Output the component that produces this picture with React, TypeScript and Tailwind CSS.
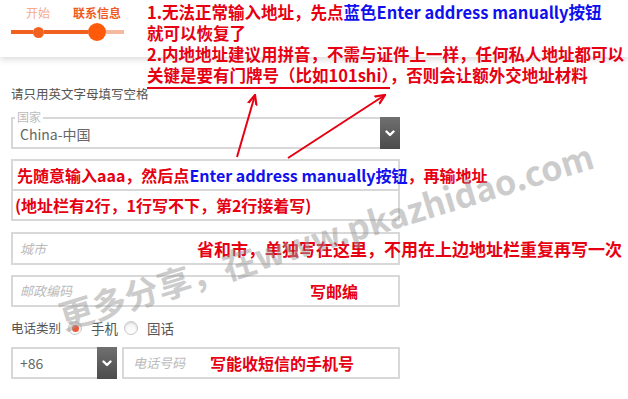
import React from 'react';

function Chevron() {
  return (
    <div className="-my-[2px] -mr-[2px] w-[20px] shrink-0 flex items-center justify-center bg-gradient-to-b from-[#707070] to-[#4c4c4c]">
      <svg width="10" height="7" viewBox="0 0 10 7">
        <path d="M1.5 1.5 L5 5 L8.5 1.5" stroke="#fff" strokeWidth="2.4" fill="none" strokeLinecap="round" strokeLinejoin="round" />
      </svg>
    </div>
  );
}

function Radio({ checked }: { checked?: boolean }) {
  return (
    <span className="w-[14px] h-[14px] rounded-full border border-[#c8c8c8] bg-gradient-to-b from-[#f4f4f4] to-white flex items-center justify-center shadow-[inset_0_1px_2px_rgba(0,0,0,0.15)]">
      {checked && <span className="w-[7px] h-[7px] rounded-full bg-[#ec5a3a]" />}
    </span>
  );
}

export default function App() {
  return (
    <div className="relative w-[628px] h-[399px] overflow-hidden bg-white font-['Noto_Sans_CJK_SC',sans-serif]">
      {/* header: progress + notes */}
      <div className="relative h-[57px] flex shadow-[0_3px_6px_rgba(0,0,0,0.13)]">
        <div className="w-[136px] shrink-0 pl-[11px] pt-[5px]">
          <div className="flex pl-[15px] gap-[23px] text-[12px] leading-[16px]">
            <span className="text-[#f7ab8a]">开始</span>
            <span className="font-bold text-[#ee5a1e]">联系信息</span>
          </div>
          <div className="mt-[2px] h-[18px] flex items-center">
            <span className="w-[22px] h-[4px] bg-[#f2601f]" />
            <span className="w-[11px] h-[11px] rounded-full bg-[#f2601f]" />
            <span className="w-[44px] h-[4px] bg-[#f2601f]" />
            <span className="w-[18px] h-[18px] rounded-full bg-[#ff5a0a]" />
            <span className="w-[18px] h-[4px] bg-[#f5b9a0]" />
          </div>
        </div>
        <div className="relative z-10 pl-[11px] pt-[2px] text-[16.5px] leading-[21px] font-bold text-[#e60012] whitespace-nowrap">
          <div>
            1.无法正常输入地址，先点<span className="text-[#1010ee]">蓝色Enter address manually按钮</span>
          </div>
          <div>就可以恢复了</div>
          <div>2.内地地址建议用拼音，不需与证件上一样，任何私人地址都可以</div>
          <div>
            <span className="border-b-2 border-[#e60012]">关键是要有门牌号（比如101shi）</span>，否则会让额外交地址材料
          </div>
        </div>
      </div>

      {/* form */}
      <div className="w-[400px] pl-[11px]">
        <p className="mt-[29px] text-[12.5px] leading-[16px] text-[#555]">请只用英文字母填写空格</p>

        <div className="relative mt-[15px] h-[32px] flex border-2 border-[#d8d8d8]">
          <span className="absolute -top-[9px] left-[2px] bg-white px-[2px] text-[12px] leading-[14px] text-[#bbb]">国家</span>
          <span className="flex-1 self-center pl-[7px] pt-[2px] text-[14px] text-[#666]">China-中国</span>
          <Chevron />
        </div>

        <div className="mt-[10px] border-2 border-[#d8d8d8] text-[16px] font-bold text-[#e60012] whitespace-nowrap">
          <div className="h-[30px] flex items-center pl-[4px] border-b-2 border-[#d8d8d8]">
            <span>
              先随意输入aaa，然后点<span className="text-[#1010ee]">Enter address manually按钮</span>，再输地址
            </span>
          </div>
          <div className="h-[28px] flex items-center pl-[2px]">(地址栏有2行，1行写不下，第2行接着写)</div>
        </div>

        <div className="mt-[11px] h-[33px] flex items-center border-2 border-[#d8d8d8] whitespace-nowrap">
          <span className="w-[184px] shrink-0 pl-[7px] text-[13px] italic text-[#bbb]">城市</span>
          <span className="shrink-0 text-[17px] font-bold text-[#e60012]">省和市，单独写在这里，不用在上边地址栏重复再写一次</span>
        </div>

        <div className="mt-[10px] h-[32px] flex items-center border-2 border-[#d8d8d8] whitespace-nowrap">
          <span className="w-[297px] shrink-0 pl-[7px] text-[13px] italic text-[#bbb]">邮政编码</span>
          <span className="shrink-0 text-[16px] font-bold text-[#e60012]">写邮编</span>
        </div>

        <div className="mt-[11px] h-[20px] flex items-center text-[#555]">
          <span className="text-[12.5px]">电话类别</span>
          <span className="ml-[7px]"><Radio checked /></span>
          <span className="ml-[9px] text-[13.5px]">手机</span>
          <span className="ml-[6px]"><Radio /></span>
          <span className="ml-[9px] text-[13.5px]">固话</span>
        </div>

        <div className="mt-[9px] h-[32px] flex">
          <div className="w-[106px] shrink-0 flex border-2 border-[#d8d8d8]">
            <span className="flex-1 self-center pl-[7px] text-[14px] text-[#666]">+86</span>
            <Chevron />
          </div>
          <div className="ml-[5px] flex-1 flex items-center border-2 border-[#d8d8d8] whitespace-nowrap">
            <span className="w-[86px] shrink-0 pl-[9px] text-[13px] italic text-[#bbb]">电话号码</span>
            <span className="shrink-0 text-[16px] font-bold text-[#e60012]">写能收短信的手机号</span>
          </div>
        </div>
      </div>

      {/* watermark */}
      <div className="absolute left-[60px] top-[297px] h-[40px] leading-[40px] origin-left -rotate-[17deg] whitespace-nowrap text-[34px] font-bold text-[#9a9a9a] opacity-50 pointer-events-none">
        更多分享，在www.pkazhidao.com
      </div>

      {/* arrows */}
      <svg className="absolute inset-0 pointer-events-none" width="628" height="399">
        <defs>
          <marker id="ah" viewBox="0 0 10 10" refX="9" refY="5" markerWidth="11" markerHeight="11" markerUnits="userSpaceOnUse" orient="auto">
            <path d="M0 1 L9 5 L0 9" stroke="#e60012" strokeWidth="2" fill="none" />
          </marker>
        </defs>
        <line x1="237" y1="157" x2="255" y2="95" stroke="#e60012" strokeWidth="2" markerEnd="url(#ah)" />
        <line x1="288" y1="158" x2="385" y2="95" stroke="#e60012" strokeWidth="2" markerEnd="url(#ah)" />
      </svg>
    </div>
  );
}
